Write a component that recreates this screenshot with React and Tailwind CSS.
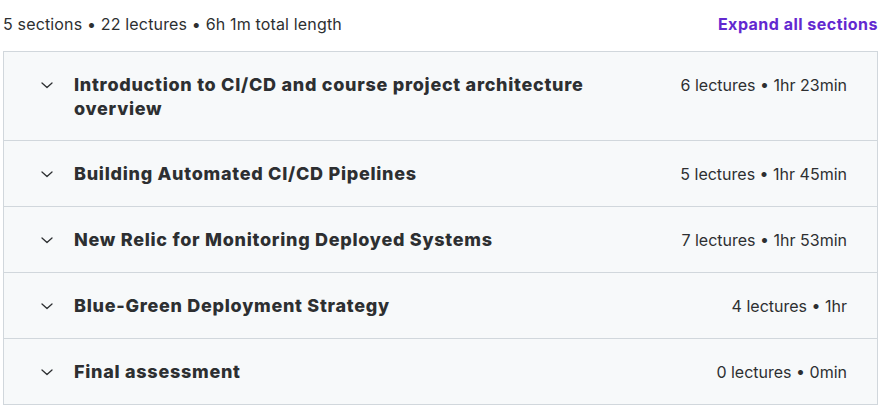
import React from "react";

const sections = [
  { title: "Introduction to CI/CD and course project architecture overview", meta: "6 lectures • 1hr 23min" },
  { title: "Building Automated CI/CD Pipelines", meta: "5 lectures • 1hr 45min" },
  { title: "New Relic for Monitoring Deployed Systems", meta: "7 lectures • 1hr 53min" },
  { title: "Blue-Green Deployment Strategy", meta: "4 lectures • 1hr" },
  { title: "Final assessment", meta: "0 lectures • 0min" },
];

function Chevron() {
  return (
    <svg width="12" height="7" viewBox="0 0 12 7" fill="none" className="shrink-0">
      <path d="M1 1l5 4.5L11 1" stroke="#2d2f31" strokeWidth="1.3" strokeLinecap="round" strokeLinejoin="round" />
    </svg>
  );
}

export default function App() {
  return (
    <div className="w-[881px] h-[408px] bg-white px-[3px] font-['Inter',sans-serif] text-[#2d2f31]">
      <div className="flex items-center justify-between pt-[12px] pb-[15px]">
        <span className="text-[16px] leading-6 tracking-[0.01em]">5 sections • 22 lectures • 6h 1m total length</span>
        <button className="text-[16px] leading-6 font-bold tracking-[0.03em] text-[#6228d0]">Expand all sections</button>
      </div>
      <div className="border border-[#d1d7dc] bg-[#f7f9fa]">
        {sections.map((s, i) => (
          <div
            key={i}
            className={`flex items-start justify-between pt-[21px] pl-[37px] pr-[30px] ${i > 0 ? "border-t border-[#d1d7dc] pb-5" : "pb-[19px]"}`}
          >
            <div className="flex items-start">
              <div className="h-6 flex items-center">
                <Chevron />
              </div>
              <h3 className="ml-[21px] w-[540px] text-[18px] leading-6 font-extrabold tracking-[0.04em]">{s.title}</h3>
            </div>
            <span className="text-[16px] leading-6">{s.meta}</span>
          </div>
        ))}
      </div>
    </div>
  );
}
